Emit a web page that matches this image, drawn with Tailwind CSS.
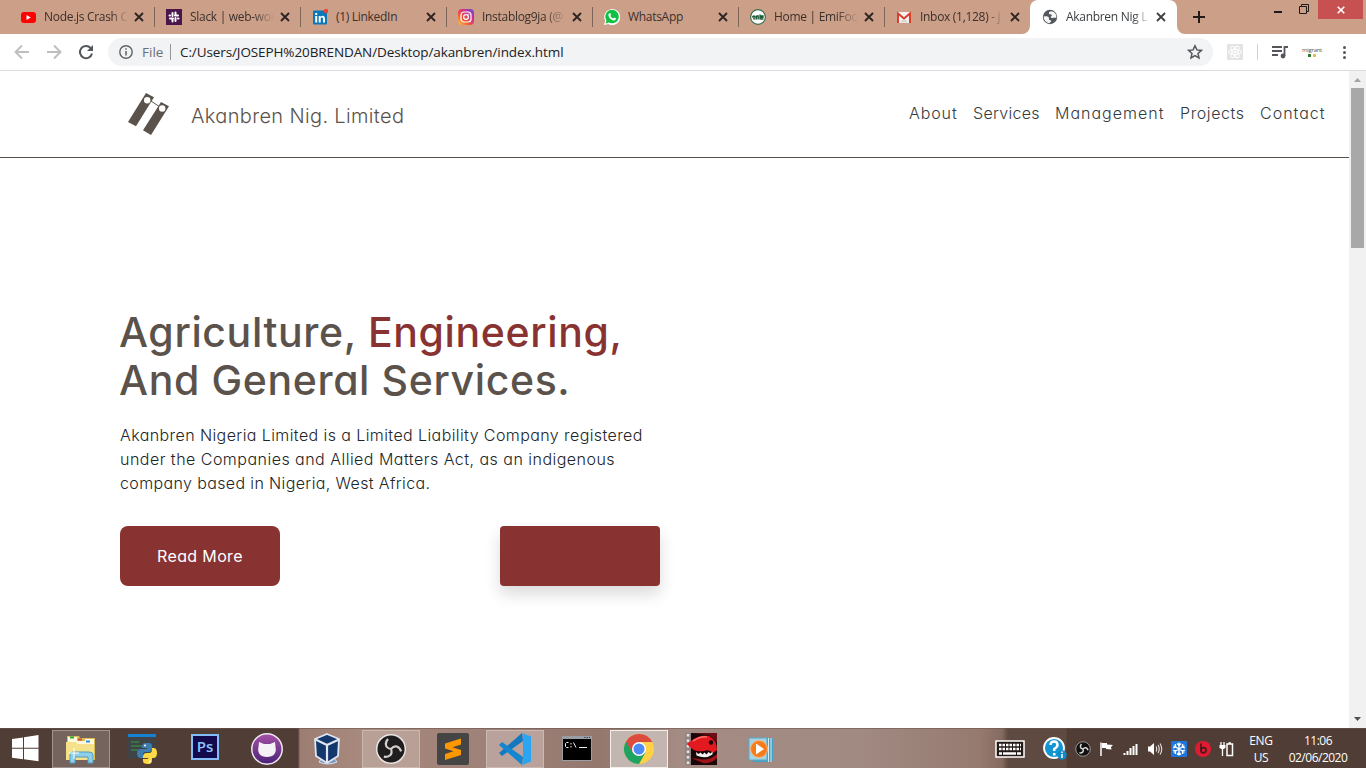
<!DOCTYPE html>
<html lang="en">
<head>
<meta charset="utf-8">
<title>Akanbren Nig Limited</title>
<script src="https://cdn.jsdelivr.net/npm/@tailwindcss/browser@4"></script>
</head>
<body class="w-[1366px] h-[768px] overflow-hidden bg-white flex flex-col font-['Open_Sans',sans-serif]">

<!-- Tab strip -->
<header class="h-[34px] shrink-0 bg-[#cc9f89] flex pl-[9px] text-[12px] tracking-[-0.3px] text-[#3b302b] whitespace-nowrap">
  <div class="w-[146px] h-[34px] flex items-center pl-[11px] pr-[11px] relative">
    <svg class="w-4 h-4 shrink-0" viewBox="0 0 16 16"><rect x="1" y="3" width="15" height="11" rx="3" fill="#f00"/><path d="M6.500 6v5l4.300-2.500z" fill="#fff"/></svg>
    <span class="ml-2 w-[84px] [mask-image:linear-gradient(to_right,#000_80%,transparent)]">Node.js Crash C</span>
    <svg class="w-3 h-3 shrink-0 ml-auto -mr-[1px]" viewBox="0 0 12 12"><path d="M2 2l8 8M10 2l-8 8" stroke="#2b2320" stroke-width="1.8"/></svg>
    <i class="absolute right-0 top-[7px] w-px h-5 bg-[#7e6559]"></i>
  </div>
  <div class="w-[146px] h-[34px] flex items-center pl-[11px] pr-[11px] relative">
    <svg class="w-4 h-4 shrink-0" viewBox="0 0 16 16"><rect width="16" height="16" fill="#4a154b"/><g stroke="#fff" stroke-width="2" stroke-linecap="round" fill="none"><path d="M6.500 4v3M9.500 9v3M4 9.500h3M9 6.500h3M3.500 6.500H4M12 9.500h.500M9.500 3.500v3M6.500 9.500v3"/></g></svg>
    <span class="ml-2 w-[84px] [mask-image:linear-gradient(to_right,#000_75%,transparent)]">Slack | web-wor</span>
    <svg class="w-3 h-3 shrink-0 ml-auto -mr-[1px]" viewBox="0 0 12 12"><path d="M2 2l8 8M10 2l-8 8" stroke="#2b2320" stroke-width="1.8"/></svg>
    <i class="absolute right-0 top-[7px] w-px h-5 bg-[#7e6559]"></i>
  </div>
  <div class="w-[146px] h-[34px] flex items-center pl-[11px] pr-[11px] relative">
    <svg class="w-4 h-4 shrink-0" viewBox="0 0 16 16"><rect x="1" y="1.500" width="14" height="14" rx="1" fill="#0a77b7"/><path d="M3.200 7h2v6.500h-2zM3.200 4h2v2h-2zM6.700 7h1.900v.9C9.800 6.200 13 6.400 13 9.500v4h-2v-3.700c0-1.700-2.300-1.600-2.300 0v3.700h-2z" fill="#fff"/><circle cx="14" cy="2" r="2.200" fill="#e8453c"/></svg>
    <span class="ml-2 w-[84px]">(1) LinkedIn</span>
    <svg class="w-3 h-3 shrink-0 ml-auto -mr-[1px]" viewBox="0 0 12 12"><path d="M2 2l8 8M10 2l-8 8" stroke="#2b2320" stroke-width="1.8"/></svg>
    <i class="absolute right-0 top-[7px] w-px h-5 bg-[#7e6559]"></i>
  </div>
  <div class="w-[146px] h-[34px] flex items-center pl-[11px] pr-[11px] relative">
    <svg class="w-4 h-4 shrink-0" viewBox="0 0 16 16"><defs><linearGradient id="ig" x1="0" y1="1" x2="1" y2="0"><stop offset="0" stop-color="#fec84a"/><stop offset=".35" stop-color="#f4582f"/><stop offset=".65" stop-color="#cf2e92"/><stop offset="1" stop-color="#5b4fd6"/></linearGradient></defs><rect width="16" height="16" rx="4" fill="url(#ig)"/><rect x="3" y="3" width="10" height="10" rx="3" fill="none" stroke="#fff" stroke-width="1.200"/><circle cx="8" cy="8" r="2.400" fill="none" stroke="#fff" stroke-width="1.200"/><circle cx="10.900" cy="5.100" r=".7" fill="#fff"/></svg>
    <span class="ml-2 w-[84px] [mask-image:linear-gradient(to_right,#000_75%,transparent)]">Instablog9ja (@</span>
    <svg class="w-3 h-3 shrink-0 ml-auto -mr-[1px]" viewBox="0 0 12 12"><path d="M2 2l8 8M10 2l-8 8" stroke="#2b2320" stroke-width="1.8"/></svg>
    <i class="absolute right-0 top-[7px] w-px h-5 bg-[#7e6559]"></i>
  </div>
  <div class="w-[146px] h-[34px] flex items-center pl-[11px] pr-[11px] relative">
    <svg class="w-4 h-4 shrink-0" viewBox="0 0 16 16"><path d="M0 16l1.200-4.200A8 8 0 1 1 4.300 15z" fill="#fff"/><path d="M1.600 14.400l.9-3A6.700 6.700 0 1 1 5 13.600z" fill="#0fc143"/><path d="M5.500 4.200c.6-.3.900 0 1.500 1.600.1.400-.6 1-.6 1.200.7 1.300 1.600 2 2.700 2.500.4 0 .8-1 1.200-1 1.500.700 1.700.8 1.700 1 0 1.300-1.200 2-2.200 2C7 11.200 4.500 8 4.400 6.200c0-.9.500-1.600 1.100-2z" fill="#fff"/></svg>
    <span class="ml-2 w-[84px]">WhatsApp</span>
    <svg class="w-3 h-3 shrink-0 ml-auto -mr-[1px]" viewBox="0 0 12 12"><path d="M2 2l8 8M10 2l-8 8" stroke="#2b2320" stroke-width="1.8"/></svg>
    <i class="absolute right-0 top-[7px] w-px h-5 bg-[#7e6559]"></i>
  </div>
  <div class="w-[146px] h-[34px] flex items-center pl-[11px] pr-[11px] relative">
    <svg class="w-4 h-4 shrink-0" viewBox="0 0 16 16"><circle cx="8" cy="8" r="7.400" fill="#fff" stroke="#34694b" stroke-width="1.100"/><path d="M2.500 8.500c0-2 2.600-2 2.600-.5H3M3 9.800h2.500M6.500 6.500v4M6.500 7h1.700v3.500M10 5.500v5M10 7h3v1.400h-2.500M10.500 10h3" fill="none" stroke="#1d5a38" stroke-width="1.300"/></svg>
    <span class="ml-2 w-[84px] [mask-image:linear-gradient(to_right,#000_75%,transparent)]">Home | EmiFoo</span>
    <svg class="w-3 h-3 shrink-0 ml-auto -mr-[1px]" viewBox="0 0 12 12"><path d="M2 2l8 8M10 2l-8 8" stroke="#2b2320" stroke-width="1.8"/></svg>
    <i class="absolute right-0 top-[7px] w-px h-5 bg-[#7e6559]"></i>
  </div>
  <div class="w-[146px] h-[34px] flex items-center pl-[11px] pr-[11px]">
    <svg class="w-4 h-4 shrink-0" viewBox="0 0 16 16"><rect x="1" y="3" width="14" height="11" fill="#f3f0ee"/><path d="M4 13.500l4-4 4 4z" fill="#ddd7d4"/><path d="M2 14V4.500L8 9.500l6-5V14" fill="none" stroke="#d9412f" stroke-width="2"/></svg>
    <span class="ml-2 w-[84px] [mask-image:linear-gradient(to_right,#000_80%,transparent)]">Inbox (1,128) - j</span>
    <svg class="w-3 h-3 shrink-0 ml-auto -mr-[1px]" viewBox="0 0 12 12"><path d="M2 2l8 8M10 2l-8 8" stroke="#2b2320" stroke-width="1.8"/></svg>
  </div>
  <div class="w-[147px] h-[34px] -ml-[1px] bg-white rounded-t-lg flex items-center pl-[12px] pr-[11px] relative text-[#3c4043]">
    <svg class="absolute -left-2 bottom-0 w-2 h-2" viewBox="0 0 8 8"><path d="M8 0v8H0a8 8 0 0 0 8-8z" fill="#fff"/></svg>
    <svg class="absolute -right-2 bottom-0 w-2 h-2" viewBox="0 0 8 8"><path d="M0 0v8h8a8 8 0 0 1-8-8z" fill="#fff"/></svg>
    <svg class="w-4 h-4 shrink-0" viewBox="0 0 16 16"><circle cx="8" cy="8" r="7.200" fill="#54585c"/><path d="M9.500 2.300c-2 .2-3 1.200-2.500 2.400.500 1 2.300.3 2.800 1.300.4 1-1.300 1.300-1.100 2.300.3 1.200 3 .2 5.700.5a6.300 6.300 0 0 0-4.900-6.500z" fill="#fff" opacity=".95"/><path d="M1.700 7.500c1.800-.3 4.300-.2 5.100 1 .6 1-.4 1.500.3 2.300.7.700 1.900.2 2 1.300.1.900-.8 1.300-1.600 2.100A6.300 6.300 0 0 1 1.700 7.500z" fill="#fff" opacity=".95"/></svg>
    <span class="ml-2 w-[84px] [mask-image:linear-gradient(to_right,#000_80%,transparent)]">Akanbren Nig L</span>
    <svg class="w-3 h-3 shrink-0 ml-auto -mr-[1px]" viewBox="0 0 12 12"><path d="M2 2l8 8M10 2l-8 8" stroke="#3c4043" stroke-width="1.800"/></svg>
  </div>
  <svg class="w-3 h-3 ml-[16px] mt-[11px]" viewBox="0 0 12 12"><path d="M6 0v12M0 6h12" stroke="#211a17" stroke-width="2"/></svg>
  <div class="ml-auto flex">
    <svg class="w-[45px] h-5" viewBox="0 0 45 20"><path d="M1 12h8" stroke="#1f1a18" stroke-width="2"/><path d="M26.500 6.500h7v7h-7zM28.500 6V4.500h7v7H34" fill="none" stroke="#1f1a18"/></svg>
    <div class="w-[45px] h-[19px] mr-[3px] bg-[#c75050] flex items-center justify-center"><svg class="w-2 h-2" viewBox="0 0 8 8"><path d="M.7.7l6.600 6.600M7.300.7L.7 7.300" stroke="#fff" stroke-width="1.600"/></svg></div>
  </div>
</header>

<!-- Toolbar -->
<div class="h-[37px] shrink-0 border-b border-[#dadce0] flex items-center pl-[14px] bg-white">
  <svg class="w-4 h-4" viewBox="0 0 16 16"><path d="M15 8H2M8 1.500L1.500 8 8 14.500" fill="none" stroke="#bcbec0" stroke-width="1.900"/></svg>
  <svg class="w-4 h-4 ml-[16px]" viewBox="0 0 16 16"><path d="M1 8h13M8 1.500L14.500 8 8 14.500" fill="none" stroke="#bcbec0" stroke-width="1.900"/></svg>
  <svg class="w-4 h-4 ml-[16px]" viewBox="0 0 16 16"><path d="M14 9.500A6.100 6.100 0 1 1 12.600 4L14 5.500" fill="none" stroke="#54585c" stroke-width="2"/><path d="M15 1v6H9z" fill="#54585c"/></svg>
  <div class="ml-[14px] w-[1105px] h-7 rounded-full bg-[#f1f3f4] flex items-center pl-[11px] pr-[10px] text-[13.500px] whitespace-nowrap">
    <svg class="w-[14px] h-[14px]" viewBox="0 0 14 14"><circle cx="7" cy="7" r="6.200" fill="none" stroke="#5f6368" stroke-width="1.400"/><path d="M7 6v4.500M7 3.300v1.500" stroke="#5f6368" stroke-width="1.500"/></svg>
    <span class="ml-[9px] w-[28px] text-[#6b6f74]">File</span>
    <i class="w-px h-4 bg-[#94979a]"></i>
    <span class="ml-[9px] text-[#202124] tracking-[-0.1px]">C:/Users/JOSEPH%20BRENDAN/Desktop/akanbren/index.html</span>
    <svg class="w-4 h-4 ml-auto" viewBox="0 0 16 16"><path d="M8 1.800l1.900 4.100 4.500.5-3.400 3 1 4.500L8 11.600l-4 2.300 1-4.500-3.400-3 4.500-.5z" fill="none" stroke="#54585c" stroke-width="1.500"/></svg>
  </div>
  <svg class="w-4 h-4 ml-[14px]" viewBox="0 0 16 16"><rect width="16" height="16" fill="#e4e4e4"/><g fill="none" stroke="#fff"><ellipse cx="8" cy="8" rx="6.500" ry="2.500"/><ellipse cx="8" cy="8" rx="6.500" ry="2.500" transform="rotate(60 8 8)"/><ellipse cx="8" cy="8" rx="6.500" ry="2.500" transform="rotate(120 8 8)"/></g><circle cx="8" cy="8" r="1.200" fill="#fff"/></svg>
  <i class="w-px h-4 bg-[#cfd1d4] ml-[14px]"></i>
  <svg class="w-4 h-4 ml-[14px]" viewBox="0 0 16 16"><path d="M0 3h10M0 7h10M0 11h6M12.500 12V3H16" fill="none" stroke="#54585c" stroke-width="1.800"/><circle cx="11" cy="12" r="2.400" fill="#54585c"/></svg>
  <div class="w-5 h-4 ml-[14px] flex flex-col items-center justify-center"><span class="text-[6px] leading-[6px] tracking-[-0.3px] text-[#555]">migrant</span><span class="flex gap-[2px] mt-px"><i class="w-[3px] h-[3px] bg-[#2f7d3a]"></i><i class="w-[3px] h-[3px] bg-[#e6c43c]"></i></span></div>
  <div class="ml-[21px] flex flex-col gap-[2px]"><i class="w-[3px] h-[3px] rounded-full bg-[#54585c]"></i><i class="w-[3px] h-[3px] rounded-full bg-[#54585c]"></i><i class="w-[3px] h-[3px] rounded-full bg-[#54585c]"></i></div>
</div>

<!-- Web page -->
<div class="h-[657px] shrink-0 flex">
  <main class="w-[1349px] flex flex-col whitespace-nowrap font-[Inter,sans-serif] [font-feature-settings:'cv11']">
    <nav class="h-[87px] border-b border-[#57504a] flex items-start">
      <svg class="w-[42px] h-[43px] ml-[128px] mt-[22px]" viewBox="128 93 42 43"><path d="M146 93l8 4.300-18 29L128 122zM161 102l8 4.300-18 28.700-8-4.700z" fill="#5b524b"/><path d="M151 101l9 6" stroke="#5b524b"/><circle cx="147.200" cy="100.300" r="3.200" fill="#fff"/><circle cx="162.200" cy="108.500" r="3.200" fill="#fff"/></svg>
      <span class="ml-[21px] mt-[30px] text-[20px] leading-[30px] font-light tracking-[0.35px] text-[#5b524b]">Akanbren Nig. Limited</span>
      <div class="ml-auto mr-[24px] mt-[30px] flex gap-4 text-[16px] leading-6 font-light text-[#333a40]">
        <span class="w-[48px] tracking-[0.9px]">About</span><span class="w-[66px] tracking-[0.3px]">Services</span><span class="w-[109px] tracking-[1px]">Management</span><span class="w-[64px] tracking-[0.6px]">Projects</span><span class="w-[65px] tracking-[1px]">Contact</span>
      </div>
    </nav>
    <section class="pl-[120px] pt-[150px]">
      <h1 class="-ml-px text-[41px] leading-[48px] font-medium tracking-[0.62px] text-[#5b524b]">Agriculture, <span class="text-[#883232]">Engineering,</span><br>And General Services.</h1>
      <p class="mt-[19px] text-[16px] leading-6 font-light text-[#212529]"><span class="tracking-[0.41px]">Akanbren Nigeria Limited is a Limited Liability Company registered</span><br><span class="tracking-[0.48px]">under the Companies and Allied Matters Act, as an indigenous</span><br><span class="tracking-[0.37px]">company based in Nigeria, West Africa.</span></p>
      <div class="mt-[31px] w-[540px] flex justify-between">
        <div class="w-[160px] h-[60px] rounded-lg bg-[#883232] text-white text-[16px] tracking-[0.35px] flex items-center justify-center">Read More</div>
        <div class="w-[160px] h-[60px] rounded bg-[#883232] shadow-[0_8px_16px_rgba(0,0,0,0.15)]"></div>
      </div>
    </section>
  </main>
  <aside class="w-[17px] bg-[#f1f1f1] flex flex-col items-center">
    <svg class="w-[17px] h-[17px]" viewBox="0 0 17 17"><path d="M5 11h7L8.500 7z" fill="#a3a3a3"/></svg>
    <div class="w-[13px] h-[160px] bg-[#a8a8a8]"></div>
    <svg class="w-[17px] h-[17px] mt-auto" viewBox="0 0 17 17"><path d="M5 6h7l-3.500 4z" fill="#505050"/></svg>
  </aside>
</div>

<!-- Taskbar -->
<footer class="h-10 shrink-0 bg-[linear-gradient(90deg,#503d35_0,#503d35_298px,#9b7d72_300px,#a8897d_360px,#9d8077_500px,#94776d_600px,#a48c84_680px,#a18a82_860px,#967a70_980px,#856a60_1002px,#5f4a41_1008px,#5f4a41_1066px,#503d35_1067px)] border-t border-[#6b574e]/60 flex items-center text-white">
  <svg class="w-[27px] h-[27px] ml-[12px]" viewBox="0 0 27 27"><path d="M0 4l11-1.500v10.300H0zM12 2.300L26.500 0v12.800H12zM0 13.800h11v10.400L0 22.700zM12 13.800h14.500v12.500L12 24.300z" fill="#fff"/></svg>
  <div class="ml-[13px] flex gap-1">
    <div class="w-[58px] h-[38px] border border-[#a2958f] bg-[#75645d] flex items-center justify-center"><svg class="w-8 h-8" viewBox="0 0 32 32"><path d="M2 3h12l1 2h15v22H2z" fill="#d9bd58"/><path d="M3 4h9v4h8V6h9v5H3z" fill="#fff9dc"/><path d="M5 3.500h4v2H5z" fill="#27a836"/><path d="M13 5.500h4v2h-4z" fill="#d84a2a"/><path d="M21 7.500h4v2h-4z" fill="#2b92dd"/><path d="M1 9h10l2 2h16v16H1z" fill="#f6e18b"/><path d="M5 30V22q0-3 3-3h16q4 0 4 3v8h-5v-6H10v6z" fill="#8fd0e8" stroke="#4b9fc0"/><path d="M9 15v11M4 20h10" stroke="#fff" stroke-width="1"/></svg></div>
    <div class="w-[58px] h-[38px] flex items-center justify-center"><svg class="w-8 h-8" viewBox="0 0 32 32"><path d="M1 1h28v24H1z" fill="#3e4448"/><path d="M1 1h28v3H1z" fill="#1681d2"/><path d="M4 9h8M4 13h11M4 17h7" stroke="#36a23f" stroke-width="1.200"/><path d="M20 10c-5 0-5 2-5 5h5v1h-7c-4 0-4 9 0 9h3v-3c0-3 1-3 5-3 4-.2 4-1 4-5s-1-4-5-4z" fill="#3e7db0"/><path d="M21 31c-5 0-5-2-5-5h5v-1h-5c0-4 1-5 5-5 4 0 4-1 4-5h2c4 0 4 10 0 10h-2v1c0 4-1 5-4 5z" fill="#ffd845"/><circle cx="18" cy="12.500" r="1" fill="#fff"/><circle cx="23" cy="28.500" r="1" fill="#fff"/></svg></div>
    <div class="w-[58px] h-[38px] flex items-center justify-center"><div class="w-7 h-[26px] -mt-1 bg-[#130a4d] border-2 border-[#84bdf5] text-[#8dc6fb] text-[15px] leading-none font-semibold flex items-center justify-center">Ps</div></div>
    <div class="w-[58px] h-[38px] flex items-center justify-center"><svg class="w-8 h-8" viewBox="0 0 32 32"><defs><linearGradient id="gh" x1="0" y1="0" x2="0" y2="1"><stop offset="0" stop-color="#a651a6"/><stop offset="1" stop-color="#4a2377"/></linearGradient></defs><circle cx="16" cy="16" r="15.200" fill="url(#gh)" stroke="#f0e9f1" stroke-width="1.500"/><path d="M8 9l5 2h6l5-2 .5 5c1.500 6-2 10-8.500 10S6 20 7.500 14z" fill="#f4f2f4"/></svg></div>
    <div class="w-[58px] h-[38px] flex items-center justify-center"><svg class="w-8 h-8" viewBox="0 0 32 32"><path d="M9 25l-3 4q8 4 18 0l-3-4z" fill="#7996ba" stroke="#d9e2ef"/><path d="M14 1l12 5-1 17-11 7L3 23 2 6z" fill="#14386c" stroke="#dfe6f1" stroke-width="1.800"/><path d="M2.500 6.500L14 12l12-5.500M14 12v17" fill="none" stroke="#dfe6f1" stroke-width="2.200"/></svg></div>
    <div class="w-[58px] h-[38px] border border-[#cbb9b1] bg-[#b8a097] flex items-center justify-center"><svg class="w-8 h-8" viewBox="0 0 32 32"><circle cx="16" cy="16" r="14.300" fill="#1f1d1e" stroke="#e9e4e2" stroke-width="1.500"/><g fill="none" stroke="#d5d0ce" stroke-width="2.100"><path d="M16 16c-6-1-6.500-6-3-10"/><path d="M16 16c-6-1-6.500-6-3-10" transform="rotate(120 16 16)"/><path d="M16 16c-6-1-6.500-6-3-10" transform="rotate(240 16 16)"/></g></svg></div>
    <div class="w-[58px] h-[38px] flex items-center justify-center"><svg class="w-8 h-8" viewBox="0 0 32 32"><rect width="32" height="32" rx="2" fill="#454545"/><path d="M24 5.500v6l-8.500 2.700L24 17v5L8 27v-6l8.500-2.700L8 15.500v-5z" fill="#ff9800"/></svg></div>
    <div class="w-[58px] h-[38px] border border-[#cbb9b1] bg-[#b8a29b] flex items-center justify-center"><svg class="w-8 h-8" viewBox="0 0 32 32"><path d="M23 0L0 20l3 3 21-15z" fill="#1278c0"/><path d="M0 12l3-3 21 15-1 8z" fill="#1485d1"/><path d="M23 0l9 3.500v25L23 32l1-3V3z" fill="#29a5f2"/></svg></div>
    <div class="w-[58px] h-[38px] flex items-center justify-center"><svg class="w-8 h-8" viewBox="0 0 32 32"><path d="M1 3h30v25H1z" fill="#999ea3"/><path d="M2 6h28v21H2z" fill="#000"/><path d="M23 4.500h6" stroke="#394d70" stroke-dasharray="1.500 1"/><path d="M7.500 9.500h-2l-1 1v3l1 1h2M10 10v1.500M10 13v1.500M12.500 9.500l2.500 5M18 14.500h8" fill="none" stroke="#eee"/></svg></div>
    <div class="w-[58px] h-[38px] border border-[#f2eeec] bg-[#c3b5b0] flex items-center justify-center"><svg class="w-8 h-8" viewBox="0 0 32 32"><circle cx="16" cy="16" r="15" fill="#fed147"/><path d="M16 16L3 8.500A15 15 0 0 0 16 31l6.500-11.500z" fill="#1ea362"/><path d="M16 9h13.300A15 15 0 0 0 3 8.500l6.500 11z" fill="#dc4b3e"/><circle cx="16" cy="16" r="7" fill="#fff"/><circle cx="16" cy="16" r="5.500" fill="#4c8bf5"/></svg></div>
    <div class="w-[58px] h-[38px] flex items-center justify-center"><svg class="w-8 h-8" viewBox="0 0 32 32"><rect width="32" height="32" fill="#190709"/><path d="M0 0h6v32H0z" fill="#8e8484"/><path d="M3 1v30" stroke="#e8e4e4" stroke-width="2.500" stroke-dasharray="2.500 3"/><path d="M7 0h25v9L24 2z" fill="#6d0d14"/><path d="M2 11C10 4 16 2 24 3q8 4 8 14l-4 3q-4-4-9-2-10 2-17-7z" fill="#e2191f"/><path d="M8 8q8-5 14-4" stroke="#ff716d" stroke-width="1.500" fill="none"/><circle cx="26" cy="9.500" r="2.200" fill="#16090a"/><path d="M11 19l2.500 2 2-1.500 2 2 2-2 2 2 2-2.500 2 1.500 2-2v3q-7 5-16 1z" fill="#f4f0ec"/><path d="M6 25l12 1.500q8 0 14-5.500v4q-5 6-14 5z" fill="#9e1218"/></svg></div>
    <div class="w-[58px] h-[38px] flex items-center justify-center"><svg class="w-8 h-8" viewBox="0 0 32 32"><path d="M6 5h20v23l-5 1H6z" fill="#49a0c6"/><path d="M24 5v24M21.500 5v24" stroke="#d3edf7"/><path d="M2 5h18v22H2z" fill="#a5d3e4" stroke="#5ba8c6"/><circle cx="12" cy="16" r="8.500" fill="#f57c1c" stroke="#f9b67c"/><path d="M9 10.500v11l8-5.500z" fill="#fff"/></svg></div>
  </div>
  <div class="ml-auto w-[372px] flex items-center">
    <svg class="w-[30px] h-5 ml-[1px]" viewBox="0 0 30 20"><path d="M1 2h28v16H1z" fill="#231a16" stroke="#fff" stroke-width="1.500"/><path d="M4 6h22M4 10h22" stroke="#fff" stroke-width="2.500" stroke-dasharray="2.500 1"/><path d="M4 14.500h3M8 14.500h13M22 14.500h4" stroke="#fff" stroke-width="2.500"/></svg>
    <svg class="w-6 h-6 ml-[18px]" viewBox="0 0 24 24"><circle cx="11" cy="11" r="10" fill="#1594d2" stroke="#fff" stroke-width="1.800"/><path d="M7.500 8q0-3.500 3.500-3.500T14.500 8q0 2-3.300 4v2" fill="none" stroke="#fff" stroke-width="2.500"/><path d="M10 16h2.500v2.500H10z" fill="#fff"/><circle cx="19" cy="18" r="4.700" fill="#118bc8"/><path d="M19 17v4M19 14.500v1.500" stroke="#fff" stroke-width="1.500"/></svg>
    <div class="ml-[8px] flex gap-2">
      <svg class="w-4 h-4" viewBox="0 0 32 32"><circle cx="16" cy="16" r="14.500" fill="#111" stroke="#bbb" stroke-width="1.500"/><g fill="none" stroke="#d8d8d8" stroke-width="3"><path d="M16 16c-6-1-6.500-6-3-10"/><path d="M16 16c-6-1-6.500-6-3-10" transform="rotate(120 16 16)"/><path d="M16 16c-6-1-6.500-6-3-10" transform="rotate(240 16 16)"/></g></svg>
      <svg class="w-4 h-4" viewBox="0 0 16 16"><path d="M2 1.500V15" stroke="#fff" stroke-width="1.500"/><path d="M3 2h5v1.500l6 .5-2 2 .5 2.500-5.500-.5V7H3z" fill="#fff"/></svg>
      <svg class="w-4 h-4" viewBox="0 0 16 16"><path d="M1.500 14v-2M4.500 14v-4M7.500 14V7M10.500 14V5M13.500 14V3" stroke="#fff" stroke-width="2"/></svg>
      <svg class="w-4 h-4" viewBox="0 0 16 16"><path d="M1 5.500h2L7 2v12l-4-3.500H1z" fill="#fff"/><path d="M9 5.500q1.500 2.500 0 5M11 4q2.500 4 0 8M13 2.500q3.500 5.500 0 11" fill="none" stroke="#e8e2df" stroke-width="1.100"/></svg>
      <svg class="w-4 h-4" viewBox="0 0 16 16"><rect width="16" height="16" rx="1" fill="#1e76dc"/><g stroke="#fff" stroke-width="1.300" fill="none"><path d="M8 1.500v13M2.500 4.700l11 6.600M2.500 11.300l11-6.600M6 2.500l2 2 2-2M6 13.500l2-2 2 2M2 7l2.700-1L4.300 3M14 7l-2.700-1 .4-3M2 9l2.700 1-.4 3M14 9l-2.700 1 .4 3"/></g></svg>
      <svg class="w-4 h-4" viewBox="0 0 16 16"><circle cx="8" cy="8" r="8" fill="#e01a33"/><path d="M6 2.500V10" stroke="#471a1b" stroke-width="1.700"/><circle cx="8.500" cy="9.300" r="2.600" fill="none" stroke="#471a1b" stroke-width="1.700"/></svg>
      <svg class="w-4 h-4" viewBox="0 0 16 16"><path d="M2 1v3M5 1v3M3.500 8v7" stroke="#fff" stroke-width="1.300"/><path d="M.5 4h6v2.500L5 8H2L.5 6.500z" fill="#fff"/><path d="M8 3h5.500v11.500H8zM9.500 2h2.500" fill="none" stroke="#fff" stroke-width="1.500"/></svg>
    </div>
    <div class="ml-[9px] w-[34px] text-center text-[12px] leading-[17px] tracking-[-0.3px] whitespace-nowrap">ENG<br>US</div>
    <div class="ml-auto mr-[15px] w-[66px] text-center text-[12px] leading-[17px] tracking-[-0.5px] whitespace-nowrap">11:06<br>02/06/2020</div>
  </div>
</footer>
</body>
</html>
